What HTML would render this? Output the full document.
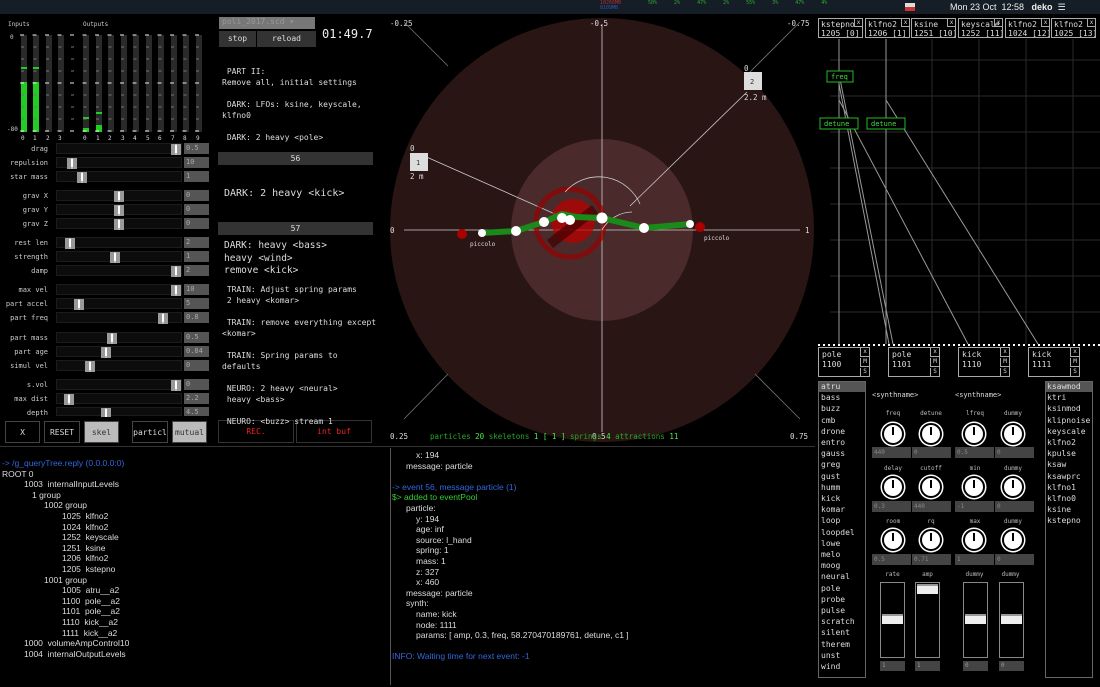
<!DOCTYPE html><html><head><meta charset="utf-8"><style>
*{margin:0;padding:0;box-sizing:border-box}
body{width:1100px;height:687px;background:#000;position:relative;overflow:hidden;font-family:"DejaVu Sans Mono","Liberation Mono",monospace;color:#ddd}
.a{position:absolute}
.lab{position:absolute;right:1052px;font-size:7px;color:#ccc;text-align:right;width:50px}
.tr{position:absolute;left:56px;width:126px;height:11px;background:#0c0c0c;border:1px solid #1c1c1c}
.kn{position:absolute;top:0;width:10px;height:11px;background:#bbb;border-left:4px solid #999;border-right:4px solid #999}
.kn:after{content:"";position:absolute;left:0;top:1px;width:2px;height:8px;background:#fff}
.vb{position:absolute;left:184px;width:25px;height:11px;background:#555;font-size:7px;color:#aaa;padding-left:2px;line-height:11px}
.btn{position:absolute;border:1px solid #444;font-size:8px;text-align:center;line-height:21px;color:#ddd}
.scr{font-size:8px;color:#ddd;line-height:11px}
.hd{position:absolute;left:218px;width:155px;height:13px;background:#333;font-size:8px;text-align:center;line-height:13px;color:#ddd}
.pb{position:absolute;top:18px;width:45px;height:20px;border:1px solid #aaa;font-size:8px;line-height:9px;padding:1px 2px;color:#ddd;overflow:hidden;white-space:nowrap}
.pb i{position:absolute;right:0;top:0;width:8px;height:8px;border-left:1px solid #aaa;border-bottom:1px solid #aaa;font-style:normal;font-size:6px;line-height:7px;text-align:center}
.bb{position:absolute;top:347px;width:52px;height:30px;border:1px solid #aaa;font-size:8px;line-height:10px;padding:2px 3px;color:#ddd}
.bb i{position:absolute;right:0;width:9px;height:9px;border-left:1px solid #aaa;border-bottom:1px solid #aaa;font-style:normal;font-size:6px;line-height:8px;text-align:center}
.knob{position:absolute;width:22px;height:22px;border-radius:50%;background:#fff;border:2px solid #000;box-shadow:0 0 0 1.5px #fff}
.knob:after{content:"";position:absolute;left:8px;top:2px;width:2px;height:8px;background:#000}
.kv{position:absolute;width:58px;height:11px;background:#444;font-size:6px;color:#888;line-height:11px;padding-left:2px}
.kl{position:absolute;font-size:6px;color:#bbb;width:58px;text-align:center}
.fd{position:absolute;top:582px;width:25px;height:76px;border:1px solid #888}
.fd b{position:absolute;left:1px;width:21px;height:10px;background:#eee;border-top:2px solid #999}
.fv{position:absolute;top:661px;width:25px;height:10px;background:#444;font-size:6px;color:#999;padding-left:2px;line-height:10px}
.lst{font-size:8px;line-height:11.2px;color:#ddd}
.con{font-family:"Liberation Sans Narrow","Liberation Sans",sans-serif;font-size:8.5px;line-height:10.6px;color:#ddd}
.con div{height:10.6px;white-space:pre}
</style></head><body>
<div class="a" style="left:0;top:0;width:1100px;height:14px;background:#151d26"></div>
<div class="a" style="left:600px;top:1px;font-size:5px;color:#a33;line-height:5px">10266MB<br><span style="color:#35a">8109MB</span></div>
<div class="a" style="left:648px;top:1px;font-size:5px;color:#3a3;line-height:5px;word-spacing:14px">50% 2% 47% 2% 55% 3% 47% 4%</div>
<div class="a" style="left:950px;top:2px;font-family:'Liberation Sans',sans-serif;font-size:9px;color:#eee">Mon 23 Oct &nbsp;12:58 &nbsp;&nbsp;<b>deko</b> &nbsp;☰</div>
<div class="a" style="left:905px;top:3px;width:10px;height:8px;background:#ddd;border-bottom:4px solid #c33"></div>

<div class="a" style="left:8px;top:21px;font-size:6px;color:#ccc">Inputs</div>
<div class="a" style="left:83px;top:21px;font-size:6px;color:#ccc">Outputs</div>
<div class="a" style="left:10px;top:34px;font-size:6px;color:#ccc">0</div>
<div class="a" style="left:7px;top:126px;font-size:6px;color:#ccc">-80</div>
<svg class="a" style="left:0;top:0" width="215" height="145">
<g fill="#2a2a2a">
<rect x="21" y="35" width="6" height="97"/><rect x="33" y="35" width="6" height="97"/><rect x="46" y="35" width="6" height="97"/><rect x="58" y="35" width="6" height="97"/>
<rect x="83" y="35" width="6" height="97"/><rect x="96" y="35" width="6" height="97"/><rect x="108" y="35" width="6" height="97"/><rect x="121" y="35" width="6" height="97"/><rect x="133" y="35" width="6" height="97"/><rect x="146" y="35" width="6" height="97"/><rect x="158" y="35" width="6" height="97"/><rect x="171" y="35" width="6" height="97"/><rect x="183" y="35" width="6" height="97"/><rect x="196" y="35" width="6" height="97"/>
</g>
<g fill="#2c2">
<rect x="21" y="82" width="6" height="50"/><rect x="33" y="82" width="6" height="50"/>
<rect x="21" y="67" width="6" height="2"/><rect x="33" y="67" width="6" height="2"/>
<rect x="83" y="128" width="6" height="4"/><rect x="96" y="125" width="6" height="7"/>
<rect x="83" y="117" width="6" height="2"/><rect x="96" y="112" width="6" height="2"/>
</g>
<g stroke="#eee" stroke-width="1" stroke-dasharray="4 8.5">
<line x1="20" y1="35" x2="205" y2="35"/><line x1="20" y1="83" x2="205" y2="83"/><line x1="20" y1="131" x2="205" y2="131"/>
</g>
<g stroke="#777" stroke-width="1" stroke-dasharray="3 9.5">
<line x1="21" y1="47" x2="205" y2="47"/><line x1="21" y1="59" x2="205" y2="59"/><line x1="21" y1="71" x2="205" y2="71"/><line x1="21" y1="95" x2="205" y2="95"/><line x1="21" y1="107" x2="205" y2="107"/><line x1="21" y1="119" x2="205" y2="119"/>
</g>
<g fill="#ddd" font-size="6" font-family="DejaVu Sans Mono"><text x="21" y="140">0</text><text x="33" y="140">1</text><text x="46" y="140">2</text><text x="58" y="140">3</text><text x="83" y="140">0</text><text x="96" y="140">1</text><text x="108" y="140">2</text><text x="121" y="140">3</text><text x="133" y="140">4</text><text x="146" y="140">5</text><text x="158" y="140">6</text><text x="171" y="140">7</text><text x="183" y="140">8</text><text x="196" y="140">9</text></g>
</svg>

<div class="lab" style="top:145px">drag</div><div class="tr" style="top:143px"><div class="kn" style="left:114px"></div></div><div class="vb" style="top:143px">0.5</div>
<div class="lab" style="top:159px">repulsion</div><div class="tr" style="top:157px"><div class="kn" style="left:10px"></div></div><div class="vb" style="top:157px">10</div>
<div class="lab" style="top:173px">star mass</div><div class="tr" style="top:171px"><div class="kn" style="left:20px"></div></div><div class="vb" style="top:171px">1</div>
<div class="lab" style="top:192px">grav X</div><div class="tr" style="top:190px"><div class="kn" style="left:57px"></div></div><div class="vb" style="top:190px">0</div>
<div class="lab" style="top:206px">grav Y</div><div class="tr" style="top:204px"><div class="kn" style="left:57px"></div></div><div class="vb" style="top:204px">0</div>
<div class="lab" style="top:220px">grav Z</div><div class="tr" style="top:218px"><div class="kn" style="left:57px"></div></div><div class="vb" style="top:218px">0</div>
<div class="lab" style="top:239px">rest len</div><div class="tr" style="top:237px"><div class="kn" style="left:8px"></div></div><div class="vb" style="top:237px">2</div>
<div class="lab" style="top:253px">strength</div><div class="tr" style="top:251px"><div class="kn" style="left:53px"></div></div><div class="vb" style="top:251px">1</div>
<div class="lab" style="top:267px">damp</div><div class="tr" style="top:265px"><div class="kn" style="left:114px"></div></div><div class="vb" style="top:265px">2</div>
<div class="lab" style="top:286px">max vel</div><div class="tr" style="top:284px"><div class="kn" style="left:114px"></div></div><div class="vb" style="top:284px">10</div>
<div class="lab" style="top:300px">part accel</div><div class="tr" style="top:298px"><div class="kn" style="left:17px"></div></div><div class="vb" style="top:298px">5</div>
<div class="lab" style="top:314px">part freq</div><div class="tr" style="top:312px"><div class="kn" style="left:101px"></div></div><div class="vb" style="top:312px">0.8</div>
<div class="lab" style="top:334px">part mass</div><div class="tr" style="top:332px"><div class="kn" style="left:50px"></div></div><div class="vb" style="top:332px">0.5</div>
<div class="lab" style="top:348px">part age</div><div class="tr" style="top:346px"><div class="kn" style="left:44px"></div></div><div class="vb" style="top:346px">0.84</div>
<div class="lab" style="top:362px">simul vel</div><div class="tr" style="top:360px"><div class="kn" style="left:28px"></div></div><div class="vb" style="top:360px">0</div>
<div class="lab" style="top:381px">s.vol</div><div class="tr" style="top:379px"><div class="kn" style="left:114px"></div></div><div class="vb" style="top:379px">0</div>
<div class="lab" style="top:395px">max dist</div><div class="tr" style="top:393px"><div class="kn" style="left:7px"></div></div><div class="vb" style="top:393px">2.2</div>
<div class="lab" style="top:409px">depth</div><div class="tr" style="top:407px;height:9px"><div class="kn" style="left:44px;height:9px"></div></div><div class="vb" style="top:407px;height:9px">4.5</div>

<div class="btn" style="left:5px;top:421px;width:35px;height:22px">X</div>
<div class="btn" style="left:44px;top:421px;width:36px;height:22px">RESET</div>
<div class="btn" style="left:84px;top:421px;width:35px;height:22px;background:#bbb;color:#333">skel</div>
<div class="btn" style="left:132px;top:421px;width:36px;height:22px">particl</div>
<div class="btn" style="left:172px;top:421px;width:35px;height:22px;background:#bbb;color:#333">mutual</div>
<div class="btn" style="left:218px;top:420px;width:76px;height:23px;color:#e22;border-color:#333">REC.</div>
<div class="btn" style="left:296px;top:420px;width:76px;height:23px;color:#e22;border-color:#333">int buf</div>

<div class="a" style="left:219px;top:17px;width:96px;height:12px;background:#777;font-size:8px;color:#999;padding-left:3px">poli_2017.scd ▾</div>
<div class="a" style="left:219px;top:31px;width:37px;height:16px;background:#333;font-size:8px;text-align:center;line-height:16px">stop</div>
<div class="a" style="left:257px;top:31px;width:59px;height:16px;background:#333;font-size:8px;text-align:center;line-height:16px">reload</div>
<div class="a" style="left:322px;top:27px;font-size:12px;color:#eee">01:49.7</div>
<div class="a scr" style="left:222px;top:66px">&nbsp;PART II:<br>Remove all, initial settings<br><br>&nbsp;DARK: LFOs: ksine, keyscale,<br>klfno0<br><br>&nbsp;DARK: 2 heavy &lt;pole&gt;</div>
<div class="hd" style="top:152px">56</div>
<div class="a" style="left:224px;top:188px;font-size:10px">DARK: 2 heavy &lt;kick&gt;</div>
<div class="hd" style="top:222px">57</div>
<div class="a" style="left:224px;top:240px;font-size:9.5px;line-height:12.5px">DARK: heavy &lt;bass&gt;<br>heavy &lt;wind&gt;<br>remove &lt;kick&gt;</div>
<div class="a scr" style="left:222px;top:284px">&nbsp;TRAIN: Adjust spring params<br>&nbsp;2 heavy &lt;komar&gt;<br><br>&nbsp;TRAIN: remove everything except<br>&lt;komar&gt;<br><br>&nbsp;TRAIN: Spring params to<br>defaults<br><br>&nbsp;NEURO: 2 heavy &lt;neural&gt;<br>&nbsp;heavy &lt;bass&gt;<br><br>&nbsp;NEURO: &lt;buzz&gt; stream 1</div>

<svg class="a" style="left:390px;top:14px" width="425" height="432">
<circle cx="212" cy="216" r="212" fill="#2a1515"/>
<circle cx="212" cy="216" r="91" fill="#4a2a2a"/>
<g stroke="#777" stroke-width="0.8"><line x1="14" y1="8" x2="58" y2="52"/><line x1="410" y1="8" x2="355" y2="63"/><line x1="14" y1="405" x2="58" y2="360"/><line x1="410" y1="405" x2="365" y2="360"/></g>
<g stroke="#ccc" stroke-width="0.8"><line x1="212" y1="10" x2="212" y2="418"/><line x1="14" y1="216" x2="410" y2="216"/>
<line x1="32" y1="141" x2="165" y2="200"/><line x1="357" y1="78" x2="240" y2="192"/></g>
<circle cx="180" cy="209" r="34" fill="none" stroke="#900" stroke-width="5" opacity="0.7"/>
<circle cx="183" cy="207" r="22" fill="#b00" opacity="0.75"/>
<path d="M160 230 L205 195" stroke="#400" stroke-width="10" opacity="0.7"/>
<path d="M212 216 A35 35 0 0 1 242 198" fill="none" stroke="#ccc" stroke-width="0.8"/>
<path d="M175 178 A45 45 0 0 1 250 190" fill="none" stroke="#ccc" stroke-width="0.8"/>
<polyline points="92,219 126,217 154,208 172,200 186,203 212,204 254,214 300,210" fill="none" stroke="#1a8a1a" stroke-width="6"/>
<circle cx="72" cy="220" r="5" fill="#a00"/><circle cx="310" cy="213" r="5" fill="#a00"/>
<g fill="#fff"><circle cx="92" cy="219" r="4"/><circle cx="126" cy="217" r="5"/><circle cx="154" cy="208" r="5"/><circle cx="172" cy="204" r="5"/><circle cx="180" cy="206" r="5"/><circle cx="212" cy="204" r="5.5"/><circle cx="254" cy="214" r="5"/><circle cx="300" cy="210" r="4"/></g>
<rect x="20" y="139" width="18" height="18" fill="#ddd"/><text x="26" y="151" font-size="7" fill="#333" font-family="DejaVu Sans Mono">1</text>
<rect x="354" y="58" width="18" height="18" fill="#ddd"/><text x="360" y="70" font-size="7" fill="#333" font-family="DejaVu Sans Mono">2</text>
<g font-size="7.5" fill="#ddd" font-family="DejaVu Sans Mono"><text x="20" y="137">0</text><text x="20" y="165">2 m</text><text x="354" y="57">0</text><text x="354" y="86">2.2 m</text>
<text x="0" y="12">-0.25</text><text x="200" y="12">-0.5</text><text x="397" y="12">-0.75</text><text x="0" y="219">0</text><text x="415" y="219">1</text>
<text x="0" y="425">0.25</text><text x="202" y="425">0.5</text><text x="400" y="425">0.75</text></g>
<g font-size="6" fill="#ddd"><text x="80" y="232">piccolo</text><text x="314" y="226">piccolo</text></g>
<text x="40" y="425" font-size="7.5" fill="#2a2" font-family="DejaVu Sans Mono">particles <tspan fill="#4e4">20</tspan>  skeletons <tspan fill="#4e4">1 [ 1 ]</tspan>       springs <tspan fill="#4e4">4</tspan>   attractions <tspan fill="#4e4">11</tspan></text>
</svg>

<div class="a" style="left:390px;top:448px;width:1px;height:237px;background:#555"></div>
<div class="a" style="left:0;top:446px;width:815px;height:1px;background:#333"></div>
<div class="a con" style="left:2px;top:458px"><div style="color:#36d">-&gt; /g_queryTree.reply (0.0.0.0:0)</div><div>ROOT 0</div><div style="padding-left:22px">1003  internalInputLevels</div><div style="padding-left:30px">1 group</div><div style="padding-left:42px">1002 group</div><div style="padding-left:60px">1025  klfno2</div><div style="padding-left:60px">1024  klfno2</div><div style="padding-left:60px">1252  keyscale</div><div style="padding-left:60px">1251  ksine</div><div style="padding-left:60px">1206  klfno2</div><div style="padding-left:60px">1205  kstepno</div><div style="padding-left:42px">1001 group</div><div style="padding-left:60px">1005  atru__a2</div><div style="padding-left:60px">1100  pole__a2</div><div style="padding-left:60px">1101  pole__a2</div><div style="padding-left:60px">1110  kick__a2</div><div style="padding-left:60px">1111  kick__a2</div><div style="padding-left:22px">1000  volumeAmpControl10</div><div style="padding-left:22px">1004  internalOutputLevels</div></div>
<div class="a con" style="left:392px;top:450px"><div style="padding-left:24px">x: 194</div><div style="padding-left:14px">message: particle</div><div></div><div style="color:#36d">-&gt; event 56, message particle (1)</div><div style="color:#3c3">$&gt; added to eventPool</div><div style="padding-left:14px">particle:</div><div style="padding-left:24px">y: 194</div><div style="padding-left:24px">age: inf</div><div style="padding-left:24px">source: l_hand</div><div style="padding-left:24px">spring: 1</div><div style="padding-left:24px">mass: 1</div><div style="padding-left:24px">z: 327</div><div style="padding-left:24px">x: 460</div><div style="padding-left:14px">message: particle</div><div style="padding-left:14px">synth:</div><div style="padding-left:24px">name: kick</div><div style="padding-left:24px">node: 1111</div><div style="padding-left:24px">params: [ amp, 0.3, freq, 58.270470189761, detune, c1 ]</div><div></div><div style="color:#36d">INFO: Waiting time for next event: -1</div></div>

<svg class="a" style="left:815px;top:14px" width="285" height="365">
<g stroke="#2a2a2a" stroke-width="1"><line x1="15" y1="46" x2="285" y2="46"/><line x1="15" y1="82" x2="285" y2="82"/><line x1="15" y1="118" x2="285" y2="118"/><line x1="15" y1="154" x2="285" y2="154"/><line x1="15" y1="190" x2="285" y2="190"/><line x1="15" y1="226" x2="285" y2="226"/><line x1="15" y1="262" x2="285" y2="262"/><line x1="15" y1="298" x2="285" y2="298"/>
<line x1="117" y1="25" x2="117" y2="330"/><line x1="164" y1="25" x2="164" y2="330"/><line x1="211" y1="25" x2="211" y2="330"/><line x1="258" y1="25" x2="258" y2="330"/></g>
<g stroke="#999" stroke-width="1"><line x1="24" y1="25" x2="24" y2="330"/><line x1="71" y1="25" x2="71" y2="330"/>
<line x1="24" y1="70" x2="74" y2="330"/><line x1="24" y1="86" x2="153" y2="330"/><line x1="71" y1="86" x2="223" y2="330"/><line x1="24" y1="60" x2="78" y2="330"/></g>
<rect x="12" y="57" width="26" height="11" fill="#000" stroke="#2b2"/><text x="16" y="65" font-size="7" fill="#4d4" font-family="DejaVu Sans Mono">freq</text>
<rect x="5" y="104" width="38" height="11" fill="#000" stroke="#2b2"/><text x="9" y="112" font-size="7" fill="#4d4" font-family="DejaVu Sans Mono">detune</text>
<rect x="52" y="104" width="38" height="11" fill="#000" stroke="#2b2"/><text x="56" y="112" font-size="7" fill="#4d4" font-family="DejaVu Sans Mono">detune</text>
<line x1="3" y1="331" x2="285" y2="331" stroke="#fff" stroke-width="2" stroke-dasharray="2 3"/>
</svg>
<div class="pb" style="left:818px">kstepno<br>1205 [0]<i>x</i></div>
<div class="pb" style="left:865px">klfno2<br>1206 [1]<i>x</i></div>
<div class="pb" style="left:911px">ksine<br>1251 [10]<i>x</i></div>
<div class="pb" style="left:958px">keyscale<br>1252 [11]<i>x</i></div>
<div class="pb" style="left:1005px">klfno2<br>1024 [12]<i>x</i></div>
<div class="pb" style="left:1051px">klfno2<br>1025 [13]<i>x</i></div>
<div class="bb" style="left:818px">pole<br>1100<i style="top:0">x</i><i style="top:10px">M</i><i style="top:20px">S</i></div>
<div class="bb" style="left:888px">pole<br>1101<i style="top:0">x</i><i style="top:10px">M</i><i style="top:20px">S</i></div>
<div class="bb" style="left:958px">kick<br>1110<i style="top:0">x</i><i style="top:10px">M</i><i style="top:20px">S</i></div>
<div class="bb" style="left:1028px">kick<br>1111<i style="top:0">x</i><i style="top:10px">M</i><i style="top:20px">S</i></div>

<div class="a" style="left:818px;top:381px;width:48px;height:297px;border:1px solid #666"></div>
<div class="a" style="left:819px;top:382px;width:46px;height:10px;background:#555"></div>
<div class="a lst" style="left:821px;top:381px">atru<br>bass<br>buzz<br>cmb<br>drone<br>entro<br>gauss<br>greg<br>gust<br>humm<br>kick<br>komar<br>loop<br>loopdel<br>lowe<br>melo<br>moog<br>neural<br>pole<br>probe<br>pulse<br>scratch<br>silent<br>therem<br>unst<br>wind</div>
<div class="a" style="left:1045px;top:381px;width:48px;height:297px;border:1px solid #666"></div>
<div class="a" style="left:1046px;top:382px;width:46px;height:10px;background:#555"></div>
<div class="a lst" style="left:1047px;top:381px">ksawmod<br>ktri<br>ksinmod<br>klipnoise<br>keyscale<br>klfno2<br>kpulse<br>ksaw<br>ksawprc<br>klfno1<br>klfno0<br>ksine<br>kstepno</div>

<div class="a" style="left:872px;top:391px;font-size:7px">&lt;synthname&gt;</div>
<div class="a" style="left:955px;top:391px;font-size:7px">&lt;synthname&gt;</div>
<div class="kl" style="left:864px;top:410px">freq</div><div class="kl" style="left:902px;top:410px">detune</div><div class="kl" style="left:946px;top:410px">lfreq</div><div class="kl" style="left:984px;top:410px">dummy</div>
<div class="knob" style="left:882px;top:423px"></div><div class="knob" style="left:920px;top:423px"></div><div class="knob" style="left:963px;top:423px"></div><div class="knob" style="left:1002px;top:423px"></div>
<div class="kv" style="left:872px;top:447px;width:39px">440</div><div class="kv" style="left:912px;top:447px;width:39px">0</div><div class="kv" style="left:955px;top:447px;width:39px">0.5</div><div class="kv" style="left:995px;top:447px;width:39px">0</div>
<div class="kl" style="left:864px;top:465px">delay</div><div class="kl" style="left:902px;top:465px">cutoff</div><div class="kl" style="left:946px;top:465px">min</div><div class="kl" style="left:984px;top:465px">dummy</div>
<div class="knob" style="left:882px;top:476px"></div><div class="knob" style="left:920px;top:476px"></div><div class="knob" style="left:963px;top:476px"></div><div class="knob" style="left:1002px;top:476px"></div>
<div class="kv" style="left:872px;top:501px;width:39px">0.3</div><div class="kv" style="left:912px;top:501px;width:39px">440</div><div class="kv" style="left:955px;top:501px;width:39px">-1</div><div class="kv" style="left:995px;top:501px;width:39px">0</div>
<div class="kl" style="left:864px;top:518px">room</div><div class="kl" style="left:902px;top:518px">rq</div><div class="kl" style="left:946px;top:518px">max</div><div class="kl" style="left:984px;top:518px">dummy</div>
<div class="knob" style="left:882px;top:529px"></div><div class="knob" style="left:920px;top:529px"></div><div class="knob" style="left:963px;top:529px"></div><div class="knob" style="left:1002px;top:529px"></div>
<div class="kv" style="left:872px;top:554px;width:39px">0.5</div><div class="kv" style="left:912px;top:554px;width:39px">0.71</div><div class="kv" style="left:955px;top:554px;width:39px">1</div><div class="kv" style="left:995px;top:554px;width:39px">0</div>
<div class="kl" style="left:880px;top:571px;width:25px">rate</div><div class="kl" style="left:915px;top:571px;width:25px">amp</div><div class="kl" style="left:962px;top:571px;width:25px">dummy</div><div class="kl" style="left:998px;top:571px;width:25px">dummy</div>
<div class="fd" style="left:880px"><b style="top:31px"></b></div><div class="fd" style="left:915px"><b style="top:1px"></b></div><div class="fd" style="left:963px"><b style="top:31px"></b></div><div class="fd" style="left:999px"><b style="top:31px"></b></div>
<div class="fv" style="left:880px">1</div><div class="fv" style="left:915px">1</div><div class="fv" style="left:963px">0</div><div class="fv" style="left:999px">0</div>
</body></html>
